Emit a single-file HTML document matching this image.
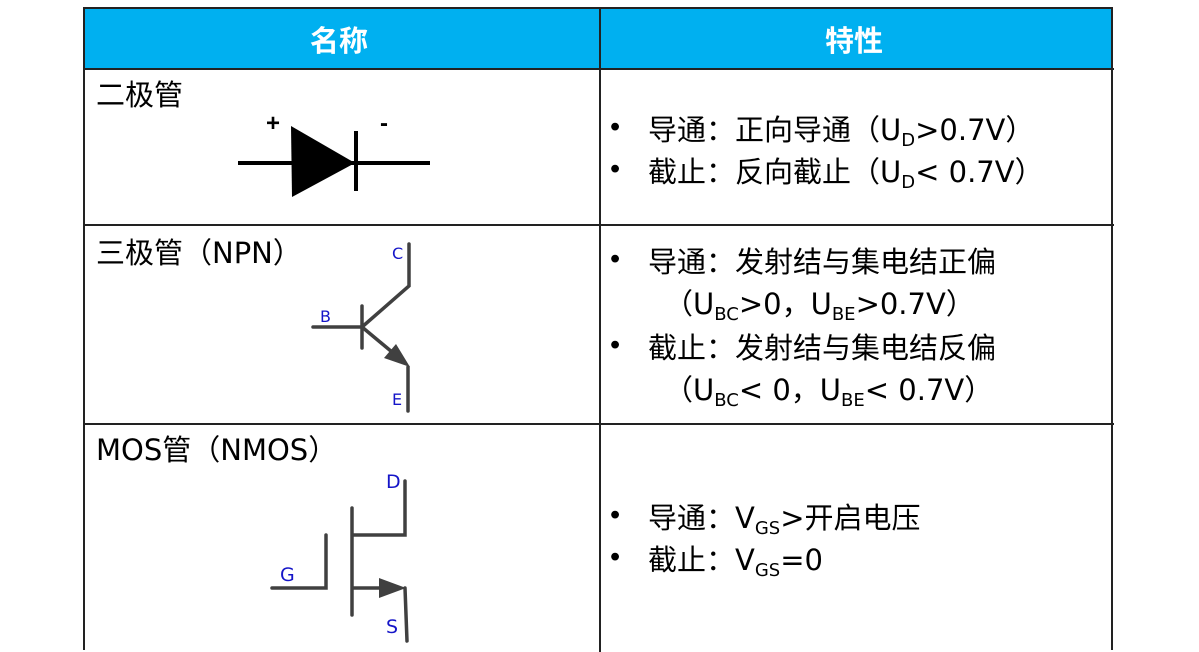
<!DOCTYPE html><html><head><meta charset="utf-8"><style>
body{margin:0;width:1199px;height:652px;background:#fff;position:relative;overflow:hidden;font-family:"DejaVu Sans","Noto Sans CJK SC",sans-serif;color:#000}
.a{position:absolute;white-space:nowrap}
.t{font-size:29px}
.u{font-family:"Liberation Sans",sans-serif;font-size:29px;margin-top:4px}
sub{font-size:18px;vertical-align:-6px}
.b{color:#1515c8;font-size:16px}
</style></head><body>
<div class="a" style="left:84px;top:8px;width:1029px;height:60px;background:#00b0f0"></div>
<div class="a" style="left:83px;top:7px;width:1030px;height:643px;border:2px solid #222;box-sizing:border-box;border-bottom:none"></div>
<div class="a" style="left:599px;top:7px;width:2px;height:645px;background:#222"></div>
<div class="a" style="left:83px;top:68px;width:1031px;height:2px;background:#222"></div>
<div class="a" style="left:83px;top:224px;width:1031px;height:2px;background:#222"></div>
<div class="a" style="left:83px;top:423px;width:1031px;height:2px;background:#222"></div>
<div class="a t" style="left:310px;top:18px;color:#fff;font-weight:bold">名称</div>
<div class="a t" style="left:825px;top:18px;color:#fff;font-weight:bold">特性</div>
<div class="a t" style="left:96px;top:72px">二极管</div>
<div class="a t" style="left:96px;top:230px">三极管（NPN）</div>
<div class="a t" style="left:96px;top:427px">MOS管（NMOS）</div>
<svg class="a" style="left:0;top:0" width="1199" height="652">
<g fill="none" stroke="#000" stroke-width="4"><line x1="238" y1="163" x2="430" y2="163"/><line x1="356" y1="131" x2="356" y2="191"/></g>
<polygon points="291,126 292,197 355,163" fill="#000"/>
<text x="266" y="131" font-size="24" font-family="Liberation Sans" font-weight="bold">+</text>
<text x="380" y="131" font-size="24" font-family="Liberation Sans" font-weight="bold">-</text>
<g fill="none" stroke="#404040" stroke-width="3.5" stroke-linecap="round">
<polyline points="409,244 409,286 362,327"/><line x1="362" y1="306" x2="362" y2="348"/><line x1="313" y1="327" x2="362" y2="327"/>
<line x1="362" y1="327" x2="398" y2="357"/><line x1="408" y1="367" x2="408" y2="411"/>
<polyline points="405,481 405,535 353,535"/><line x1="352" y1="508" x2="352" y2="615"/><polyline points="326,535 326,588 272,588"/>
<line x1="353" y1="588" x2="385" y2="588"/><line x1="405" y1="588" x2="407" y2="641"/>
</g>
<polygon points="410,367 384,358 396,344" fill="#404040"/>
<polygon points="406,588 379,578 379,598" fill="#404040"/>
</svg>
<div class="a b" style="left:392px;top:244px">C</div>
<div class="a b" style="left:320px;top:307px">B</div>
<div class="a b" style="left:392px;top:390px">E</div>
<div class="a b" style="left:386px;top:471px;font-size:19px">D</div>
<div class="a b" style="left:280px;top:564px;font-size:19px">G</div>
<div class="a b" style="left:386px;top:616px;font-size:19px">S</div>
<div class="a u" style="left:610px;top:107px">•</div><div class="a t" style="left:648px;top:107px">导通：正向导通（U<sub>D</sub>&gt;0.7V）</div>
<div class="a u" style="left:610px;top:149px">•</div><div class="a t" style="left:648px;top:149px">截止：反向截止（U<sub>D</sub>&lt; 0.7V）</div>
<div class="a u" style="left:610px;top:239px">•</div><div class="a t" style="left:648px;top:239px">导通：发射结与集电结正偏</div>
<div class="a t" style="left:664px;top:281px">（U<sub>BC</sub>&gt;0，U<sub>BE</sub>&gt;0.7V）</div>
<div class="a u" style="left:610px;top:325px">•</div><div class="a t" style="left:648px;top:325px">截止：发射结与集电结反偏</div>
<div class="a t" style="left:664px;top:367px">（U<sub>BC</sub>&lt; 0，U<sub>BE</sub>&lt; 0.7V）</div>
<div class="a u" style="left:610px;top:495px">•</div><div class="a t" style="left:648px;top:495px">导通：V<sub>GS</sub>&gt;开启电压</div>
<div class="a u" style="left:610px;top:537px">•</div><div class="a t" style="left:648px;top:537px">截止：V<sub>GS</sub>=0</div>
</body></html>
